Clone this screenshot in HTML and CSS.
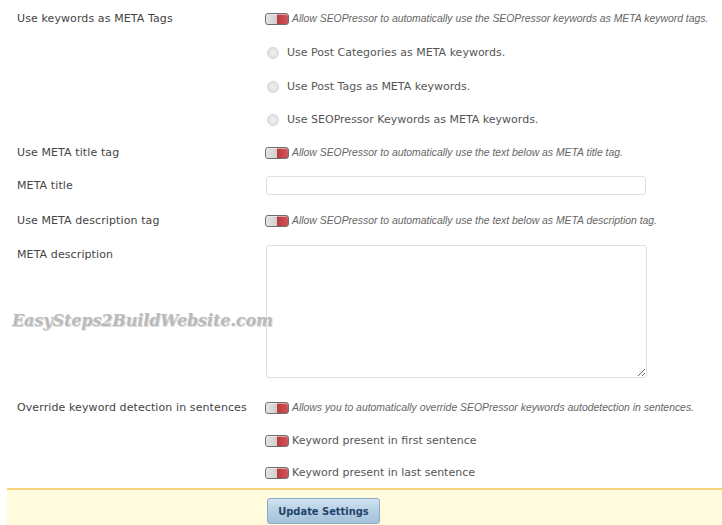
FILE: index.html
```html
<!DOCTYPE html>
<html>
<head>
<meta charset="utf-8">
<link rel="stylesheet" href="styles.css">
</head>
<body>
<div class="page">
  <div class="row r1">
    <div class="label">Use keywords as META Tags</div>
    <div class="field"><span class="toggle"></span><span class="desc">Allow SEOPressor to automatically use the SEOPressor keywords as META keyword tags.</span></div>
  </div>
  <div class="row r2">
    <div class="label"></div>
    <div class="field"><span class="radio"></span><span class="opt">Use Post Categories as META keywords.</span></div>
  </div>
  <div class="row r3">
    <div class="label"></div>
    <div class="field"><span class="radio"></span><span class="opt">Use Post Tags as META keywords.</span></div>
  </div>
  <div class="row r3">
    <div class="label"></div>
    <div class="field"><span class="radio"></span><span class="opt">Use SEOPressor Keywords as META keywords.</span></div>
  </div>
  <div class="row r3">
    <div class="label">Use META title tag</div>
    <div class="field"><span class="toggle"></span><span class="desc">Allow SEOPressor to automatically use the text below as META title tag.</span></div>
  </div>
  <div class="row r3">
    <div class="label">META title</div>
    <div class="field"><input class="text" type="text"></div>
  </div>
  <div class="row r7">
    <div class="label">Use META description tag</div>
    <div class="field"><span class="toggle"></span><span class="desc">Allow SEOPressor to automatically use the text below as META description tag.</span></div>
  </div>
  <div class="row r8">
    <div class="label">META description</div>
    <div class="field"><textarea class="area"></textarea></div>
  </div>
  <div class="row r9">
    <div class="label">Override keyword detection in sentences</div>
    <div class="field"><span class="toggle"></span><span class="desc">Allows you to automatically override SEOPressor keywords autodetection in sentences.</span></div>
  </div>
  <div class="row r10">
    <div class="label"></div>
    <div class="field"><span class="toggle"></span><span class="opt tight">Keyword present in first sentence</span></div>
  </div>
  <div class="row r11">
    <div class="label"></div>
    <div class="field"><span class="toggle"></span><span class="opt tight">Keyword present in last sentence</span></div>
  </div>
  <div class="footer">
    <button class="btn" type="button">Update Settings</button>
  </div>
  <div class="watermark">EasySteps2BuildWebsite.com</div>
</div>
</body>
</html>
```
FILE: styles.css
```css
html, body {
  margin: 0;
  padding: 0;
  background: #fff;
}
body {
  width: 722px;
  height: 525px;
  overflow: hidden;
  font-family: "DejaVu Sans", Verdana, sans-serif;
  font-size: 11px;
  color: #444;
}
.page {
  position: relative;
  padding-top: 1px;
}
.row {
  display: flex;
  align-items: center;
  height: 33px;
}
.r1 { height: 34px; }
.r2 { height: 35px; }
.r3 { height: 33px; }
.r7 { height: 36px; }
.r8 { height: 152px; align-items: flex-start; }
.r9 { height: 34px; }
.r10 { height: 32px; }
.r11 { height: 32px; }
.label {
  width: 248px;
  padding-left: 17px;
  color: #444;
  letter-spacing: 0.1px;
  flex: none;
}
.r8 .label { padding-top: 10px; }
.r8 .field { padding-top: 7px; }
.field {
  display: flex;
  align-items: center;
  flex: 1;
  white-space: nowrap;
}
.toggle {
  width: 22px;
  height: 10px;
  border: 1px solid #6e6e6e;
  border-radius: 3px;
  background: linear-gradient(to right, #e4e4e4 0, #cfcfcf 48%, #b73a3e 50%, #d0555a 100%);
  box-shadow: inset 0 1px 0 rgba(255,255,255,0.5);
  flex: none;
  margin-top: 1px;
}
.desc {
  margin-left: 3px;
  font-family: "Liberation Sans", Arial, sans-serif;
  font-style: italic;
  font-size: 10.4px;
  color: #666;
}
.radio {
  width: 10px;
  height: 10px;
  border: 1px solid #d4d4d4;
  border-radius: 50%;
  background: radial-gradient(circle, #f2f2f2 0, #e2e2e2 60%, #f6f6f6 100%);
  margin-left: 2px;
  flex: none;
}
.opt {
  margin-left: 8px;
  color: #555;
}
.opt.tight { margin-left: 3px; }
.text {
  width: 380px;
  height: 19px;
  box-sizing: border-box;
  border: 1px solid #dedede;
  border-radius: 3px;
  margin: 0 0 0 1px;
  background: #fff;
}
.area {
  width: 381px;
  height: 133px;
  box-sizing: border-box;
  border: 1px solid #dedede;
  border-radius: 3px;
  margin: 0 0 0 1px;
  background: #fff;
}
.footer {
  margin-left: 7px;
  height: 38px;
  box-sizing: border-box;
  border-top: 2px solid #f5d57a;
  background: #fffbdc;
  padding: 8px 0 0 260px;
}
.btn {
  width: 113px;
  height: 26px;
  margin: 0;
  border: 1px solid #8ba9c3;
  border-radius: 3px;
  background: linear-gradient(to bottom, #d2e3f1 0, #b5cfe4 50%, #a4c2da 100%);
  font-family: "DejaVu Sans Condensed", "DejaVu Sans", Verdana, sans-serif;
  font-size: 11px;
  font-weight: bold;
  color: #22446a;
  padding: 0;
}
.watermark {
  position: absolute;
  left: 12px;
  top: 311px;
  font-family: "DejaVu Serif", serif;
  font-style: italic;
  font-weight: bold;
  font-size: 16px;
  color: #bababa;
  letter-spacing: -0.1px;
  text-shadow: 1px 1px 0 #dcdcdc;
}
```
